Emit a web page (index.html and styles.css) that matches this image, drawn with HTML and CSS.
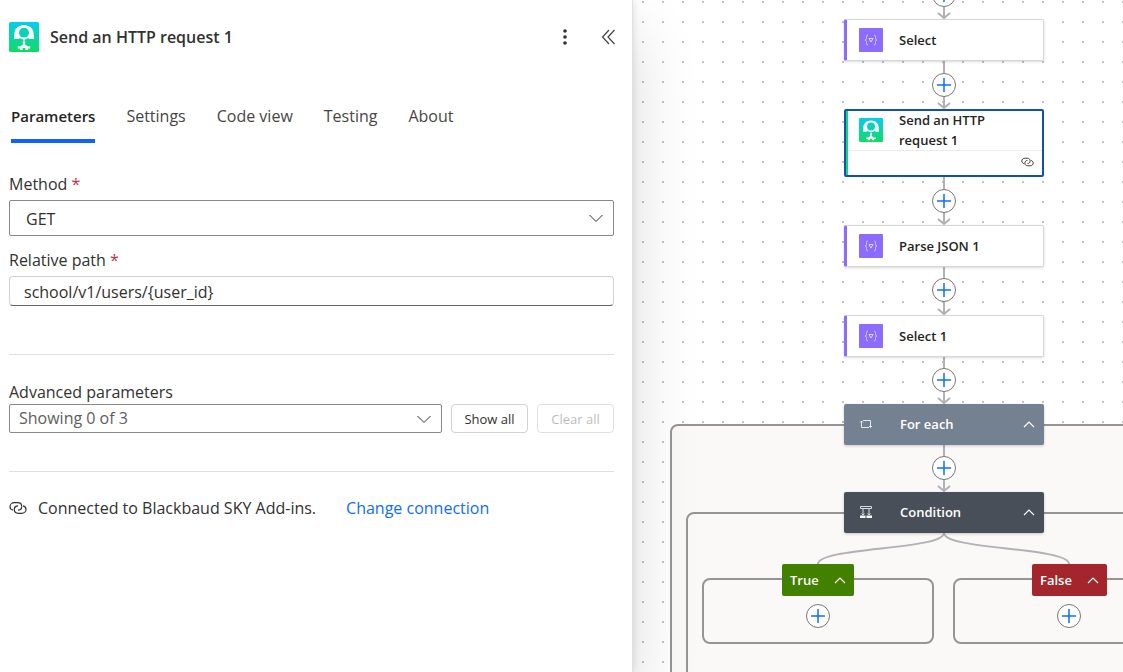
FILE: index.html
```html
<!DOCTYPE html>
<html lang="en">
<head>
  <meta charset="UTF-8" />
  <meta name="viewport" content="width=device-width, initial-scale=1.0"/>
  <title>Flow designer</title>
  <link rel="stylesheet" href="styles.css">
</head>
<body>
  <!-- shared icons -->
  <svg class="sprite" aria-hidden="true">
    <defs>
      <linearGradient id="skyFill" x1="0" y1="0" x2="0" y2="1">
        <stop offset="0" stop-color="#04cdf0"/>
        <stop offset="1" stop-color="#0fdc62"/>
      </linearGradient>
      <symbol id="sky" viewBox="0 0 29 29">
        <rect width="29" height="29" rx="1.5" fill="url(#skyFill)"/>
        <path d="M14.500 3C9 3 5.500 6.500 5.200 11C5.100 13 5 15 4.800 16.500H8.500C9.500 16.500 10 16 10.300 15.300C12 17.300 17 17.300 18.700 15.300C19 16 19.500 16.500 20.500 16.500H24.200C24 15 23.900 13 23.800 11C23.500 6.500 20 3 14.500 3Z" fill="#fff"/>
        <circle cx="14.500" cy="10.300" r="4.800" fill="#08d3ba"/>
        <path d="M14.500 16.500V22" stroke="#fff" stroke-width="1"/>
        <circle cx="14.500" cy="20" r="1.400" fill="#fff"/>
        <path d="M14.500 21L18 23.500H20.500V25.500H18.500V27H15.800V25.200H13.200V27H10.500V25.500H8.500V23.500H11Z" fill="#fff"/>
      </symbol>
      <symbol id="data" viewBox="0 0 24 24">
        <rect width="24" height="24" rx="1" fill="#8c6cff"/>
        <path d="M9 7C7.500 7 7.500 8 7.500 9.500C7.500 11 7.300 11.700 6 12C7.300 12.300 7.500 13 7.500 14.500C7.500 16 7.500 17 9 17M15 7C16.500 7 16.500 8 16.500 9.500C16.500 11 16.700 11.700 18 12C16.700 12.300 16.500 13 16.500 14.500C16.500 16 16.500 17 15 17M10 10.500H14L12 14Z" fill="none" stroke="#dcd2ff" stroke-width="1"/>
      </symbol>
      <symbol id="link" viewBox="0 0 18 14">
        <path d="M12.700 5.500C12.700 3 11 1.700 8.500 1.700H5.500C2.800 1.700 1 3.500 1 5.500C1 7.500 2.300 8.800 4 9.200" fill="none" stroke="currentColor" stroke-width="1.200"/>
        <path d="M14 4.800C15.700 5.200 17 6.500 17 8.500C17 10.500 15.200 12.300 12.500 12.300H9.500C7 12.300 5.300 11 5.300 8.500C5.300 6.300 7 4.800 9 4.800M12.700 5.500C12.700 7.700 11 9.200 9 9.200" fill="none" stroke="currentColor" stroke-width="1.200"/>
      </symbol>
      <symbol id="chevronDown" viewBox="0 0 16 16">
        <path d="M1.500 5L8 11.500L14.500 5" fill="none" stroke="currentColor" stroke-width="1"/>
      </symbol>
      <symbol id="chevronUp" viewBox="0 0 12 12">
        <path d="M1 9L6 4L11 9" fill="none" stroke="currentColor" stroke-width="1.200"/>
      </symbol>
      <symbol id="plus" viewBox="0 0 14 14">
        <path d="M7 0V14M0 7H14" fill="none" stroke="currentColor" stroke-width="1.500"/>
      </symbol>
    </defs>
  </svg>

  <div class="designer">
    <section class="panel">
      <header class="panel-header">
        <svg class="panel-logo"><use href="#sky"/></svg>
        <h1>Send an HTTP request 1</h1>
        <button class="icon-button" aria-label="More">
          <svg width="20" height="20"><g fill="#323130"><circle cx="10" cy="4" r="1.800"/><circle cx="10" cy="10" r="1.800"/><circle cx="10" cy="16" r="1.800"/></g></svg>
        </button>
        <button class="icon-button" aria-label="Collapse">
          <svg width="20" height="20"><path d="M10 3L3.500 10L10 17M15.500 3L9 10L15.500 17" fill="none" stroke="#424242" stroke-width="1.200"/></svg>
        </button>
      </header>

      <nav class="tabs">
        <button class="tab active">Parameters</button>
        <button class="tab">Settings</button>
        <button class="tab">Code view</button>
        <button class="tab">Testing</button>
        <button class="tab">About</button>
      </nav>

      <form class="form">
        <div class="form-group">
          <label for="method">Method <span class="required">*</span></label>
          <div class="dropdown">
            <select id="method" class="method"><option>GET</option></select>
            <svg><use href="#chevronDown"/></svg>
          </div>
        </div>
        <div class="form-group">
          <label for="path">Relative path <span class="required">*</span></label>
          <input id="path" type="text" value="school/v1/users/{user_id}">
        </div>

        <div class="advanced">
          <label for="advanced">Advanced parameters</label>
          <div class="advanced-row">
            <div class="dropdown">
              <select id="advanced" class="showing"><option>Showing 0 of 3</option></select>
              <svg><use href="#chevronDown"/></svg>
            </div>
            <button type="button" class="button">Show all</button>
            <button type="button" class="button" disabled>Clear all</button>
          </div>
        </div>
      </form>

      <footer class="connection">
        <svg class="connection-icon"><use href="#link"/></svg>
        <span>Connected to Blackbaud SKY Add-ins.</span>
        <a href="#">Change connection</a>
      </footer>
    </section>

    <main class="canvas">
      <div class="scope scope-foreach"></div>
      <div class="scope scope-condition"></div>
      <div class="scope scope-true"></div>
      <div class="scope scope-false"></div>

      <svg class="edges">
        <g fill="none" stroke="#b1b1b7" stroke-width="2">
          <path d="M311 0V18M311 61V108M311 177V224M311 267V314M311 357V403M311 445V491"/>
          <path d="M305 13L311 18L317 13M305 103L311 108L317 103M305 219L311 224L317 219M305 309L311 314L317 309M305 398L311 403L317 398M305 486L311 491L317 486"/>
          <path d="M311 533C311 550 185 547 185 564M311 533C311 550 436 547 436 564"/>
        </g>
      </svg>

      <button class="add add-1" aria-label="Add action"><svg><use href="#plus"/></svg></button>
      <article class="card card-select">
        <svg class="card-icon"><use href="#data"/></svg><span>Select</span>
      </article>
      <button class="add add-2" aria-label="Add action"><svg><use href="#plus"/></svg></button>
      <article class="card card-http selected">
        <div class="card-main">
          <svg class="card-icon"><use href="#sky"/></svg><span>Send an HTTP request 1</span>
        </div>
        <div class="card-footer"><svg><use href="#link"/></svg></div>
      </article>
      <button class="add add-3" aria-label="Add action"><svg><use href="#plus"/></svg></button>
      <article class="card card-parse">
        <svg class="card-icon"><use href="#data"/></svg><span>Parse JSON 1</span>
      </article>
      <button class="add add-4" aria-label="Add action"><svg><use href="#plus"/></svg></button>
      <article class="card card-select1">
        <svg class="card-icon"><use href="#data"/></svg><span>Select 1</span>
      </article>
      <button class="add add-5" aria-label="Add action"><svg><use href="#plus"/></svg></button>

      <button class="bar bar-foreach">
        <svg class="bar-icon" viewBox="0 0 16 16"><path d="M3.500 5V11.500H11M2 6.500L3.500 5L5 6.500M5 4.500H12.500V11M11 10L12.500 11.500L14 10" fill="none" stroke="#e4e8ec" stroke-width="1"/></svg>
        <span>For each</span>
        <svg class="bar-chevron"><use href="#chevronUp"/></svg>
      </button>
      <button class="add add-6" aria-label="Add action"><svg><use href="#plus"/></svg></button>
      <button class="bar bar-condition">
        <svg class="bar-icon" viewBox="0 0 16 16"><path d="M2.500 2.500H13.500V4.500H2.500ZM5 5V11M11 5V11M3.500 9.500L5 11L6.500 9.500M9.500 9.500L11 11L12.500 9.500" fill="none" stroke="#d8dbde" stroke-width="1"/><path d="M2 11.500H7.500V14H2ZM8.500 11.500H14V14H8.500Z" fill="#fff"/></svg>
        <span>Condition</span>
        <svg class="bar-chevron"><use href="#chevronUp"/></svg>
      </button>

      <button class="branch branch-true">True <svg><use href="#chevronUp"/></svg></button>
      <button class="branch branch-false">False <svg><use href="#chevronUp"/></svg></button>
      <button class="add add-true" aria-label="Add action"><svg><use href="#plus"/></svg></button>
      <button class="add add-false" aria-label="Add action"><svg><use href="#plus"/></svg></button>
    </main>
  </div>
</body>
</html>
```
FILE: styles.css
```css
* {
  box-sizing: border-box;
}

body {
  margin: 0;
  font-family: "Segoe UI", "Open Sans", sans-serif;
  font-size: 16px;
  line-height: 20px;
  color: #323130;
  background: #fff;
}

button, input, select {
  font: inherit;
  color: inherit;
}

button {
  padding: 0;
  border: none;
  background: none;
  cursor: pointer;
}

svg {
  display: block;
  flex: none;
}

.sprite {
  position: absolute;
  width: 0;
  height: 0;
}

.designer {
  display: flex;
  min-height: 100vh;
}

/* side panel */
.panel {
  flex: 0 1 633px;
  position: relative;
  z-index: 1;
  padding: 22px 18px 22px 9px;
  background: #fff;
  border-right: 1px solid #e1e1e1;
  box-shadow: 0 0 8px rgba(0, 0, 0, 0.12), 0 32px 64px rgba(0, 0, 0, 0.14);
}

.panel-header {
  display: flex;
  align-items: center;
  height: 30px;
  margin-right: -5px;
}

.panel-logo {
  width: 30px;
  height: 30px;
}

.panel-header h1 {
  flex: 1;
  margin: 0 0 0 11px;
  font-size: 16px;
  font-weight: 600;
}

.icon-button {
  width: 20px;
  height: 20px;
  margin-left: 24px;
}

.tabs {
  display: flex;
  gap: 31px;
  margin: 52px 0 31px 2px;
}

.tab {
  padding-bottom: 11px;
  border-bottom: 4px solid transparent;
  line-height: 24px;
  color: #484644;
}

.tab.active {
  font-size: 15px;
  font-weight: 600;
  color: #242424;
  border-bottom-color: #0f62fe;
}

label {
  display: block;
  margin-bottom: 6px;
}

.required {
  color: #c4314b;
}

.form-group {
  margin-bottom: 14px;
}

.dropdown {
  display: grid;
  align-items: center;
}

.dropdown select,
.dropdown svg {
  grid-area: 1 / 1;
}

.dropdown svg {
  width: 16px;
  height: 16px;
  margin-right: 10px;
  justify-self: end;
  pointer-events: none;
}

select {
  width: 100%;
  appearance: none;
  background: #fff;
  border: 1px solid #8a8886;
  border-radius: 2px;
}

.method {
  height: 36px;
  padding: 2px 16px 0;
}

.showing {
  height: 29px;
  padding: 0 9px 2px;
  color: #605e5c;
}

input[type="text"] {
  display: block;
  width: 100%;
  height: 30px;
  padding: 2px 14px 0;
  border: 1px solid #d1d1d1;
  border-bottom-color: #616161;
  border-radius: 4px;
}

.advanced {
  margin-top: 48px;
  padding: 27px 0 38px;
  border-top: 1px solid #e1dfdd;
  border-bottom: 1px solid #e1dfdd;
}

.advanced label {
  margin-bottom: 2px;
}

.advanced-row {
  display: flex;
  gap: 9px;
}

.advanced-row .dropdown {
  flex: 1;
}

.button {
  width: 77px;
  border: 1px solid #d1d1d1;
  border-radius: 4px;
  background: #fff;
  font-size: 13px;
}

.button:disabled {
  color: #bdbdbd;
  border-color: #e0e0e0;
}

.connection {
  display: flex;
  align-items: center;
  margin-top: 26px;
}

.connection-icon {
  width: 18px;
  height: 14px;
  margin-right: 11px;
}

.connection a {
  margin-left: 30px;
  color: #0f6cff;
  text-decoration: none;
}

/* flow canvas */
.canvas {
  flex: 1;
  position: relative;
  overflow: hidden;
  background: #fff radial-gradient(circle, #c4c4c8 1px, transparent 1px) 0 -8px / 20px 20px;
}

.edges {
  position: absolute;
  inset: 0;
  width: 100%;
  height: 100%;
}

.card,
.bar {
  position: absolute;
  left: 211px;
  width: 200px;
  display: flex;
  align-items: center;
  border-radius: 2px;
  font-size: 13px;
  font-weight: 600;
}

.card {
  height: 42px;
  padding-left: 12px;
  background: #fff;
  border: 1px solid #d6d6d6;
  border-left: 3px solid #8c6cff;
  box-shadow: 0 1px 3px rgba(0, 0, 0, 0.15);
  color: #242424;
}

.card-icon {
  width: 24px;
  height: 24px;
  margin-right: 16px;
}

.card-select { top: 19px; }
.card-http { top: 109px; }
.card-parse { top: 225px; }
.card-select1 { top: 315px; }

.card.selected {
  display: block;
  height: 68px;
  padding: 0;
  border: 2px solid #1250b5;
  box-shadow: inset 2px 0 #0fdc62;
}

.card-main {
  display: flex;
  align-items: center;
  height: 39px;
  padding: 0 30px 2px 13px;
}

.card-footer {
  display: flex;
  justify-content: flex-end;
  margin-left: 2px;
  padding: 6px 8px;
  border-top: 1px solid #edebe9;
}

.card-footer svg {
  width: 13px;
  height: 10px;
}

.bar {
  height: 41px;
  padding: 0 9px 2px 14px;
  color: #fff;
  text-align: left;
  box-shadow: 0 1px 3px rgba(0, 0, 0, 0.2);
}

.bar span {
  flex: 1;
  margin-left: 26px;
}

.bar-icon {
  width: 16px;
  height: 16px;
}

.bar-chevron,
.branch svg {
  width: 12px;
  height: 12px;
}

.bar-foreach {
  top: 404px;
  background: #748191;
}

.bar-condition {
  top: 492px;
  background: #484f58;
}

.add {
  position: absolute;
  left: 299px;
  display: grid;
  place-items: center;
  width: 24px;
  height: 24px;
  border: 1px solid #797775;
  border-radius: 50%;
  background: #fff;
  color: #0f6cff;
}

.add svg {
  width: 14px;
  height: 14px;
}

.add-1 { top: -17px; }
.add-2 { top: 73px; }
.add-3 { top: 189px; }
.add-4 { top: 278px; }
.add-5 { top: 368px; }
.add-6 { top: 456px; }
.add-true { top: 604px; left: 173px; }
.add-false { top: 604px; left: 424px; }

.scope {
  position: absolute;
  border: 2px solid #979593;
  border-radius: 8px;
  background: #faf9f8;
}

.scope-foreach {
  top: 424px;
  left: 37px;
  width: 548px;
  height: 280px;
}

.scope-condition {
  top: 512px;
  left: 53px;
  width: 516px;
  height: 176px;
}

.scope-true,
.scope-false {
  top: 578px;
  width: 232px;
  height: 66px;
}

.scope-true { left: 69px; }
.scope-false { left: 320px; }

.branch {
  position: absolute;
  top: 564px;
  display: flex;
  align-items: center;
  justify-content: space-between;
  height: 32px;
  padding: 0 8px;
  border-radius: 2px;
  color: #fff;
  font-size: 13px;
  font-weight: 600;
}

.branch-true {
  left: 149px;
  width: 72px;
  background: #428000;
}

.branch-false {
  left: 399px;
  width: 75px;
  background: #a4262c;
}
```
